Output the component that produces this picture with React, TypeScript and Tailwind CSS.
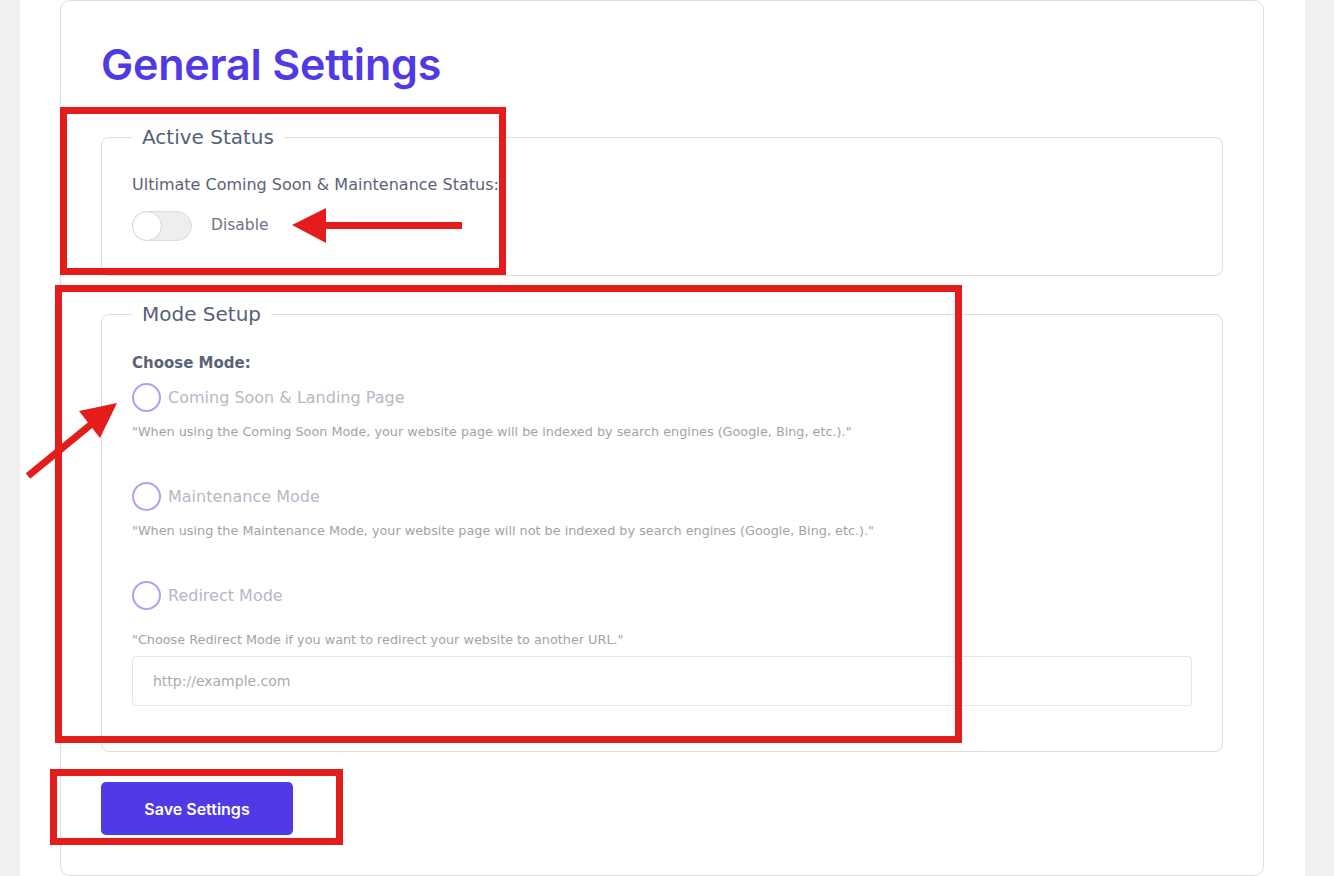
import React from 'react';

const font = { fontFamily: '"DejaVu Sans", "Noto Sans", sans-serif' };
const headFont = { fontFamily: 'Inter, "Noto Sans", sans-serif' };

type Mode = { id: string; label: string; note: string };

const modes: Mode[] = [
  {
    id: 'coming-soon',
    label: 'Coming Soon & Landing Page',
    note: '"When using the Coming Soon Mode, your website page will be indexed by search engines (Google, Bing, etc.)."',
  },
  {
    id: 'maintenance',
    label: 'Maintenance Mode',
    note: '"When using the Maintenance Mode, your website page will not be indexed by search engines (Google, Bing, etc.)."',
  },
  {
    id: 'redirect',
    label: 'Redirect Mode',
    note: '"Choose Redirect Mode if you want to redirect your website to another URL."',
  },
];

function Section({ title, children, className = '' }: { title: string; children: React.ReactNode; className?: string }) {
  return (
    <fieldset className={`rounded-lg border border-[#dcdcdc] px-[30px] ${className}`}>
      <legend className="px-2.5 text-[20px] leading-7 text-[#555f78]">{title}</legend>
      {children}
    </fieldset>
  );
}

function RadioRow({ mode, last }: { mode: Mode; last?: boolean }) {
  return (
    <div>
      <label className="flex items-center gap-[7px]">
        <span className="h-[29px] w-[29px] rounded-full border-2 border-[#aba3f2] bg-white" />
        <span className="text-[16px] leading-6 text-[#b7b7c6]">{mode.label}</span>
      </label>
      <p className={`${last ? 'mt-[21px]' : 'mt-[11px]'} text-[12.8px] leading-[18px] text-[#a3a3a3]`}>{mode.note}</p>
    </div>
  );
}

// red annotation marks drawn over the page
function Annotations() {
  return (
    <>
      <div className="pointer-events-none absolute left-[60px] top-[107px] h-[168px] w-[446px] border-[7px] border-[#e41c1c]" />
      <div className="pointer-events-none absolute left-[55px] top-[285px] h-[458px] w-[907px] border-[7px] border-[#e41c1c]" />
      <div className="pointer-events-none absolute left-[50px] top-[769px] h-[76px] w-[293px] border-[7px] border-[#e41c1c]" />
      <svg className="pointer-events-none absolute left-0 top-0" width="1334" height="876">
        <rect x="320" y="222" width="142" height="7" fill="#e41c1c" />
        <polygon points="292,225 326,208 326,243" fill="#e41c1c" />
        <line x1="28" y1="476" x2="94" y2="422" stroke="#e41c1c" strokeWidth="7" />
        <polygon points="117,403 79,411 100,438" fill="#e41c1c" />
      </svg>
    </>
  );
}

export default function App() {
  return (
    <div className="relative flex min-h-screen bg-[#f0f0f0]" style={font}>
      <div className="ml-5 w-[1285px] bg-white pl-10 pr-[41px]">
        <div className="rounded-[10px] border border-[#dedede] px-10 pb-10 pt-[38px]">
          <h1 className="text-[43px] font-semibold leading-[50px] tracking-[-0.2px] text-[#4f3ae6]" style={headFont}>
            General Settings
          </h1>

          <Section title="Active Status" className="mt-[34px] pb-[34px] pt-[23px]">
            <p className="text-[16px] leading-[22px] text-[#5b6279]">Ultimate Coming Soon &amp; Maintenance Status:</p>
            <div className="mt-[15px] flex items-center gap-[19px]">
              <button className="flex h-[30px] w-[60px] items-center rounded-full border border-[#dcdcdc] bg-[#eeeeee] p-0">
                <span className="-ml-px h-[30px] w-[30px] rounded-full border border-[#d6d6d6] bg-white" />
              </button>
              <span className="text-[15.5px] text-[#6f7486]">Disable</span>
            </div>
          </Section>

          <Section title="Mode Setup" className="mt-[24px] pb-[45px] pt-[24px]">
            <p className="text-[15px] font-semibold leading-[22px] text-[#5b6279]">Choose Mode:</p>
            <div className="mt-[9px] flex flex-col gap-[41px]">
              {modes.map((m, i) => (
                <RadioRow key={m.id} mode={m} last={i === modes.length - 1} />
              ))}
            </div>
            <input
              type="text"
              placeholder="http://example.com"
              className="mt-[7px] h-[50px] w-full rounded border border-[#e6e6e6] px-5 text-[14px] text-[#555] outline-none placeholder:text-[#ababab]"
            />
          </Section>

          <button
            className="mt-[30px] h-[53px] w-[192px] rounded-[5px] bg-[#4f3ae6] text-[16px] font-semibold text-white"
            style={headFont}
          >
            Save Settings
          </button>
        </div>
      </div>
      <Annotations />
    </div>
  );
}
